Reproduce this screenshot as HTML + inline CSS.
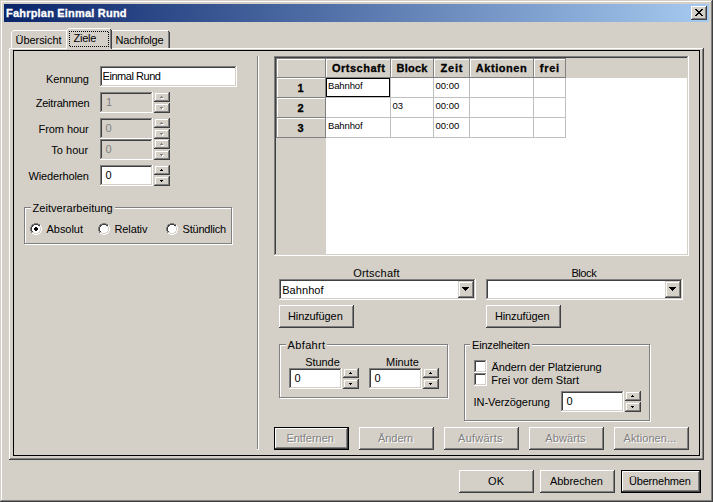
<!DOCTYPE html>
<html><head><meta charset="utf-8"><title>Fahrplan Einmal Rund</title>
<style>
html,body{margin:0;padding:0;}
body{width:713px;height:502px;overflow:hidden;background:#d4d0c8;font-family:"Liberation Sans",sans-serif;font-size:11px;line-height:13px;color:#000;position:relative;}
.a{position:absolute;box-sizing:border-box;white-space:nowrap;}
.t{position:absolute;white-space:nowrap;line-height:13px;height:13px;}
.b{font-weight:bold;-webkit-text-stroke:0.3px;}
.s{font-size:9.5px;}
.dis{color:#808080;text-shadow:1px 1px 0 #fff;}
.gr{color:#808080;}
.win{left:0;top:0;width:713px;height:502px;background:#d4d0c8;box-shadow:inset -1px -1px 0 #404040,inset 1px 1px 0 #d4d0c8,inset -2px -2px 0 #808080,inset 2px 2px 0 #fff;}
.title{left:4px;top:4px;width:705px;height:18px;background:linear-gradient(to right,#0a246a,#a6caf0);}
.btn{background:#d4d0c8;box-shadow:inset -1px -1px 0 #404040,inset 1px 1px 0 #fff,inset -2px -2px 0 #808080,inset 2px 2px 0 #d4d0c8;}
.cbtn{background:#d4d0c8;box-shadow:inset -1px -1px 0 #404040,inset 1px 1px 0 #d4d0c8,inset -2px -2px 0 #808080,inset 2px 2px 0 #fff;}
.dbtn{background:#d4d0c8;box-shadow:inset 0 0 0 1px #000,inset -2px -2px 0 #404040,inset 2px 2px 0 #fff,inset -3px -3px 0 #808080;}
.sunk{background:#fff;box-shadow:inset -1px -1px 0 #fff,inset 1px 1px 0 #808080,inset -2px -2px 0 #d4d0c8,inset 2px 2px 0 #404040;}
.sunk.g{background:#d4d0c8;}
.grp{border:1px solid #808080;box-shadow:1px 1px 0 #fff,inset 1px 1px 0 #fff;}
.leg{background:#d4d0c8;height:4px;}
.sp{width:16px;height:10px;background:#d4d0c8;box-shadow:inset -1px -1px 0 #404040,inset 1px 1px 0 #d4d0c8,inset -2px -2px 0 #808080,inset 2px 2px 0 #fff;}
.sp::before,.sp::after{content:"";position:absolute;background:#000;height:1px;}
.sp.u::before{left:7px;top:4px;width:1px;}
.sp.u::after{left:6px;top:5px;width:3px;}
.sp.d::before{left:6px;top:4px;width:3px;}
.sp.d::after{left:7px;top:5px;width:1px;}
.sp.x::before,.sp.x::after{background:#808080;box-shadow:1px 1px 0 #fff;}
.hd{background:#d4d0c8;border-right:1px solid #808080;border-bottom:1px solid #808080;box-shadow:inset 1px 1px 0 #fff;}
.vl{background:#c0c0c0;width:1px;}
.hl{background:#c0c0c0;height:1px;}
.radio{width:12px;height:12px;border-radius:50%;background:#fff;box-shadow:inset 1px 1px 0 #808080,inset -1px -1px 0 #fff,inset 2px 2px 0 #404040,inset -2px -2px 0 #d4d0c8;}
.w{background:#fff;}.g{background:#808080;}.k{background:#404040;}
.dh{height:1px;background:repeating-linear-gradient(to right,#000 0 1px,transparent 1px 2px);}
.dv{width:1px;background:repeating-linear-gradient(to bottom,#000 0 1px,transparent 1px 2px);}
</style></head><body>
<div class="a win" style="left:0px;top:0px;width:713px;height:502px;"></div>
<div class="a title" style="left:4px;top:4px;width:705px;height:18px;"></div>
<div class="t b" style="left:6.0px;top:7px;letter-spacing:0.20px;color:#fff">Fahrplan Einmal Rund</div>
<div class="a btn" style="left:691px;top:6px;width:16px;height:14px;"><svg width="16" height="14" style="position:absolute;left:0;top:0"><path d="M4 3h2v1h-2zM10 3h2v1h-2zM5 4h2v1h-2zM9 4h2v1h-2zM6 5h4v1h-4zM7 6h2v1h-2zM6 7h4v1h-4zM5 8h2v1h-2zM9 8h2v1h-2zM4 9h2v1h-2zM10 9h2v1h-2z" fill="#000" shape-rendering="crispEdges"/></svg></div>
<div class="a " style="left:9px;top:48px;width:695px;height:412px;box-shadow:inset -1px -1px 0 #404040,inset 1px 1px 0 #fff,inset -2px -2px 0 #808080;"></div>
<div class="a " style="left:13px;top:50px;width:687px;height:406px;border:1px solid #000;"></div>
<div class="a w" style="left:13px;top:30px;width:53px;height:1px;"></div>
<div class="a w" style="left:12px;top:31px;width:1px;height:1px;"></div>
<div class="a w" style="left:11px;top:32px;width:1px;height:16px;"></div>
<div class="t " style="left:15.5px;top:34px;letter-spacing:-0.05px;">Übersicht</div>
<div class="a w" style="left:112px;top:30px;width:56px;height:1px;"></div>
<div class="a k" style="left:168px;top:31px;width:1px;height:1px;"></div>
<div class="a g" style="left:168px;top:32px;width:1px;height:16px;"></div>
<div class="a k" style="left:169px;top:32px;width:1px;height:16px;"></div>
<div class="t " style="left:115.5px;top:34px;letter-spacing:-0.17px;">Nachfolge</div>
<div class="a " style="left:66px;top:28px;width:46px;height:21px;background:#d4d0c8;"></div>
<div class="a w" style="left:68px;top:28px;width:42px;height:1px;"></div>
<div class="a w" style="left:67px;top:29px;width:1px;height:1px;"></div>
<div class="a w" style="left:66px;top:30px;width:1px;height:19px;"></div>
<div class="a k" style="left:110px;top:29px;width:1px;height:1px;"></div>
<div class="a g" style="left:110px;top:30px;width:1px;height:18px;"></div>
<div class="a k" style="left:111px;top:30px;width:1px;height:19px;"></div>
<div class="a dh" style="left:69px;top:31px;width:39px;height:1px;"></div>
<div class="a dh" style="left:70px;top:46px;width:39px;height:1px;"></div>
<div class="a dv" style="left:69px;top:31px;width:1px;height:15px;"></div>
<div class="a dv" style="left:108px;top:32px;width:1px;height:15px;"></div>
<div class="t " style="left:73.5px;top:32px;letter-spacing:-0.25px;">Ziele</div>
<div class="t " style="left:46.1px;top:73px;letter-spacing:-0.21px;">Kennung</div>
<div class="a sunk" style="left:100px;top:66px;width:137px;height:21px;"></div>
<div class="t " style="left:102.5px;top:70px;letter-spacing:-0.45px;">Einmal Rund</div>
<div class="t " style="left:35.7px;top:97px;letter-spacing:-0.20px;">Zeitrahmen</div>
<div class="a sunk g" style="left:100px;top:92px;width:53px;height:21px;"></div>
<div class="t gr" style="left:106.0px;top:96px;letter-spacing:0.00px;">1</div>
<div class="a sp u x" style="left:154px;top:92px;width:16px;height:10px;"></div>
<div class="a sp d x" style="left:154px;top:103px;width:16px;height:10px;"></div>
<div class="t " style="left:38.5px;top:123px;letter-spacing:-0.06px;">From hour</div>
<div class="a sunk g" style="left:100px;top:118px;width:53px;height:21px;"></div>
<div class="t gr" style="left:105.5px;top:122px;letter-spacing:0.00px;">0</div>
<div class="a sp u x" style="left:154px;top:118px;width:16px;height:10px;"></div>
<div class="a sp d x" style="left:154px;top:129px;width:16px;height:10px;"></div>
<div class="t " style="left:51.3px;top:144px;letter-spacing:0.03px;">To hour</div>
<div class="a sunk g" style="left:100px;top:139px;width:53px;height:21px;"></div>
<div class="t gr" style="left:105.5px;top:143px;letter-spacing:0.00px;">0</div>
<div class="a sp u x" style="left:154px;top:139px;width:16px;height:10px;"></div>
<div class="a sp d x" style="left:154px;top:150px;width:16px;height:10px;"></div>
<div class="t " style="left:28.5px;top:170px;letter-spacing:-0.14px;">Wiederholen</div>
<div class="a sunk" style="left:100px;top:165px;width:53px;height:21px;"></div>
<div class="t " style="left:105.5px;top:169px;letter-spacing:0.00px;">0</div>
<div class="a sp u" style="left:154px;top:165px;width:16px;height:10px;"></div>
<div class="a sp d" style="left:154px;top:176px;width:16px;height:10px;"></div>
<div class="a grp" style="left:24px;top:207px;width:208px;height:37px;"></div>
<div class="a " style="left:31px;top:207px;width:84px;height:2px;background:#d4d0c8;"></div>
<div class="t " style="left:32.5px;top:202px;letter-spacing:0.05px;">Zeitverarbeitung</div>
<svg class="a" style="left:30px;top:223px" width="12" height="12" shape-rendering="crispEdges"><path d="M4 0h4v1h-4zM2 1h2v1h-2zM8 1h2v1h-2zM1 2h1v1h-1zM1 3h1v1h-1zM0 4h1v1h-1zM0 5h1v1h-1zM0 6h1v1h-1zM0 7h1v1h-1zM1 8h1v1h-1zM1 9h1v1h-1z" fill="#808080"/><path d="M4 1h4v1h-4zM2 2h2v1h-2zM8 2h2v1h-2zM2 3h1v1h-1zM1 4h1v1h-1zM1 5h1v1h-1zM1 6h1v1h-1zM1 7h1v1h-1zM2 8h1v1h-1z" fill="#404040"/><path d="M4 2h4v1h-4zM10 2h1v1h-1zM3 3h6v1h-6zM10 3h1v1h-1zM2 4h8v1h-8zM11 4h1v1h-1zM2 5h8v1h-8zM11 5h1v1h-1zM2 6h8v1h-8zM11 6h1v1h-1zM2 7h8v1h-8zM11 7h1v1h-1zM3 8h6v1h-6zM10 8h1v1h-1zM4 9h4v1h-4zM10 9h1v1h-1zM2 10h2v1h-2zM8 10h2v1h-2zM4 11h4v1h-4z" fill="#fff"/><path d="M9 3h1v1h-1zM10 4h1v1h-1zM10 5h1v1h-1zM10 6h1v1h-1zM10 7h1v1h-1zM9 8h1v1h-1zM2 9h2v1h-2zM8 9h2v1h-2zM4 10h4v1h-4z" fill="#d4d0c8"/><path d="M5 4h2v1h-2zM4 5h4v1h-4zM4 6h4v1h-4zM5 7h2v1h-2z" fill="#000"/></svg>
<div class="t " style="left:46.5px;top:223px;letter-spacing:-0.03px;">Absolut</div>
<svg class="a" style="left:98px;top:223px" width="12" height="12" shape-rendering="crispEdges"><path d="M4 0h4v1h-4zM2 1h2v1h-2zM8 1h2v1h-2zM1 2h1v1h-1zM1 3h1v1h-1zM0 4h1v1h-1zM0 5h1v1h-1zM0 6h1v1h-1zM0 7h1v1h-1zM1 8h1v1h-1zM1 9h1v1h-1z" fill="#808080"/><path d="M4 1h4v1h-4zM2 2h2v1h-2zM8 2h2v1h-2zM2 3h1v1h-1zM1 4h1v1h-1zM1 5h1v1h-1zM1 6h1v1h-1zM1 7h1v1h-1zM2 8h1v1h-1z" fill="#404040"/><path d="M4 2h4v1h-4zM10 2h1v1h-1zM3 3h6v1h-6zM10 3h1v1h-1zM2 4h8v1h-8zM11 4h1v1h-1zM2 5h8v1h-8zM11 5h1v1h-1zM2 6h8v1h-8zM11 6h1v1h-1zM2 7h8v1h-8zM11 7h1v1h-1zM3 8h6v1h-6zM10 8h1v1h-1zM4 9h4v1h-4zM10 9h1v1h-1zM2 10h2v1h-2zM8 10h2v1h-2zM4 11h4v1h-4z" fill="#fff"/><path d="M9 3h1v1h-1zM10 4h1v1h-1zM10 5h1v1h-1zM10 6h1v1h-1zM10 7h1v1h-1zM9 8h1v1h-1zM2 9h2v1h-2zM8 9h2v1h-2zM4 10h4v1h-4z" fill="#d4d0c8"/></svg>
<div class="t " style="left:114.5px;top:223px;letter-spacing:-0.12px;">Relativ</div>
<svg class="a" style="left:166px;top:223px" width="12" height="12" shape-rendering="crispEdges"><path d="M4 0h4v1h-4zM2 1h2v1h-2zM8 1h2v1h-2zM1 2h1v1h-1zM1 3h1v1h-1zM0 4h1v1h-1zM0 5h1v1h-1zM0 6h1v1h-1zM0 7h1v1h-1zM1 8h1v1h-1zM1 9h1v1h-1z" fill="#808080"/><path d="M4 1h4v1h-4zM2 2h2v1h-2zM8 2h2v1h-2zM2 3h1v1h-1zM1 4h1v1h-1zM1 5h1v1h-1zM1 6h1v1h-1zM1 7h1v1h-1zM2 8h1v1h-1z" fill="#404040"/><path d="M4 2h4v1h-4zM10 2h1v1h-1zM3 3h6v1h-6zM10 3h1v1h-1zM2 4h8v1h-8zM11 4h1v1h-1zM2 5h8v1h-8zM11 5h1v1h-1zM2 6h8v1h-8zM11 6h1v1h-1zM2 7h8v1h-8zM11 7h1v1h-1zM3 8h6v1h-6zM10 8h1v1h-1zM4 9h4v1h-4zM10 9h1v1h-1zM2 10h2v1h-2zM8 10h2v1h-2zM4 11h4v1h-4z" fill="#fff"/><path d="M9 3h1v1h-1zM10 4h1v1h-1zM10 5h1v1h-1zM10 6h1v1h-1zM10 7h1v1h-1zM9 8h1v1h-1zM2 9h2v1h-2zM8 9h2v1h-2zM4 10h4v1h-4z" fill="#d4d0c8"/></svg>
<div class="t " style="left:182.5px;top:223px;letter-spacing:-0.21px;">Stündlich</div>
<div class="a g" style="left:257px;top:56px;width:1px;height:393px;"></div>
<div class="a w" style="left:258px;top:56px;width:1px;height:394px;"></div>
<div class="a w" style="left:257px;top:449px;width:2px;height:1px;"></div>
<div class="a sunk" style="left:274px;top:56px;width:415px;height:200px;"></div>
<div class="a " style="left:276px;top:58px;width:411px;height:20px;background:#d4d0c8;"></div>
<div class="a " style="left:276px;top:78px;width:50px;height:176px;background:#d4d0c8;"></div>
<div class="a g" style="left:276px;top:58px;width:50px;height:1px;"></div>
<div class="a g" style="left:325px;top:58px;width:1px;height:20px;"></div>
<div class="a g" style="left:276px;top:77px;width:50px;height:1px;"></div>
<div class="a g" style="left:276px;top:58px;width:1px;height:20px;"></div>
<div class="a w" style="left:277px;top:59px;width:1px;height:18px;"></div>
<div class="a w" style="left:277px;top:59px;width:48px;height:1px;"></div>
<div class="a g" style="left:326px;top:58px;width:65px;height:1px;"></div>
<div class="a g" style="left:390px;top:58px;width:1px;height:20px;"></div>
<div class="a g" style="left:326px;top:77px;width:65px;height:1px;"></div>
<div class="a w" style="left:326px;top:59px;width:1px;height:18px;"></div>
<div class="a w" style="left:326px;top:59px;width:64px;height:1px;"></div>
<div class="a g" style="left:391px;top:58px;width:43px;height:1px;"></div>
<div class="a g" style="left:433px;top:58px;width:1px;height:20px;"></div>
<div class="a g" style="left:391px;top:77px;width:43px;height:1px;"></div>
<div class="a w" style="left:391px;top:59px;width:1px;height:18px;"></div>
<div class="a w" style="left:391px;top:59px;width:42px;height:1px;"></div>
<div class="a g" style="left:434px;top:58px;width:36px;height:1px;"></div>
<div class="a g" style="left:469px;top:58px;width:1px;height:20px;"></div>
<div class="a g" style="left:434px;top:77px;width:36px;height:1px;"></div>
<div class="a w" style="left:434px;top:59px;width:1px;height:18px;"></div>
<div class="a w" style="left:434px;top:59px;width:35px;height:1px;"></div>
<div class="a g" style="left:470px;top:58px;width:64px;height:1px;"></div>
<div class="a g" style="left:533px;top:58px;width:1px;height:20px;"></div>
<div class="a g" style="left:470px;top:77px;width:64px;height:1px;"></div>
<div class="a w" style="left:470px;top:59px;width:1px;height:18px;"></div>
<div class="a w" style="left:470px;top:59px;width:63px;height:1px;"></div>
<div class="a g" style="left:534px;top:58px;width:32px;height:1px;"></div>
<div class="a g" style="left:565px;top:58px;width:1px;height:20px;"></div>
<div class="a g" style="left:534px;top:77px;width:32px;height:1px;"></div>
<div class="a w" style="left:534px;top:59px;width:1px;height:18px;"></div>
<div class="a w" style="left:534px;top:59px;width:31px;height:1px;"></div>
<div class="a g" style="left:276px;top:78px;width:1px;height:20px;"></div>
<div class="a w" style="left:277px;top:78px;width:1px;height:19px;"></div>
<div class="a w" style="left:277px;top:78px;width:48px;height:1px;"></div>
<div class="a g" style="left:325px;top:78px;width:1px;height:20px;"></div>
<div class="a g" style="left:276px;top:97px;width:50px;height:1px;"></div>
<div class="a g" style="left:276px;top:98px;width:1px;height:20px;"></div>
<div class="a w" style="left:277px;top:98px;width:1px;height:19px;"></div>
<div class="a w" style="left:277px;top:98px;width:48px;height:1px;"></div>
<div class="a g" style="left:325px;top:98px;width:1px;height:20px;"></div>
<div class="a g" style="left:276px;top:117px;width:50px;height:1px;"></div>
<div class="a g" style="left:276px;top:118px;width:1px;height:20px;"></div>
<div class="a w" style="left:277px;top:118px;width:1px;height:19px;"></div>
<div class="a w" style="left:277px;top:118px;width:48px;height:1px;"></div>
<div class="a g" style="left:325px;top:118px;width:1px;height:20px;"></div>
<div class="a g" style="left:276px;top:137px;width:50px;height:1px;"></div>
<div class="a vl" style="left:390px;top:78px;width:1px;height:60px;"></div>
<div class="a vl" style="left:433px;top:78px;width:1px;height:60px;"></div>
<div class="a vl" style="left:469px;top:78px;width:1px;height:60px;"></div>
<div class="a vl" style="left:533px;top:78px;width:1px;height:60px;"></div>
<div class="a vl" style="left:565px;top:78px;width:1px;height:60px;"></div>
<div class="a hl" style="left:326px;top:97px;width:240px;height:1px;"></div>
<div class="a hl" style="left:326px;top:117px;width:240px;height:1px;"></div>
<div class="a hl" style="left:326px;top:137px;width:240px;height:1px;"></div>
<div class="a " style="left:326px;top:78px;width:64px;height:19px;border:1px solid #000;"></div>
<div class="t b" style="left:331.9px;top:62px;letter-spacing:0.51px;">Ortschaft</div>
<div class="t b" style="left:396.6px;top:62px;letter-spacing:0.19px;">Block</div>
<div class="t b" style="left:440.5px;top:62px;letter-spacing:0.80px;">Zeit</div>
<div class="t b" style="left:475.8px;top:62px;letter-spacing:0.55px;">Aktionen</div>
<div class="t b" style="left:539.8px;top:62px;letter-spacing:0.72px;">frei</div>
<div class="t b" style="left:297.5px;top:82px;letter-spacing:0.00px;">1</div>
<div class="t b" style="left:297.5px;top:102px;letter-spacing:0.00px;">2</div>
<div class="t b" style="left:297.5px;top:122px;letter-spacing:0.00px;">3</div>
<div class="t s" style="left:328.0px;top:79px;letter-spacing:-0.13px;">Bahnhof</div>
<div class="t s" style="left:435.6px;top:79px;letter-spacing:-0.02px;">00:00</div>
<div class="t s" style="left:392.5px;top:99px;letter-spacing:0.00px;">03</div>
<div class="t s" style="left:435.6px;top:99px;letter-spacing:-0.02px;">00:00</div>
<div class="t s" style="left:328.0px;top:119px;letter-spacing:-0.13px;">Bahnhof</div>
<div class="t s" style="left:435.6px;top:119px;letter-spacing:-0.02px;">00:00</div>
<div class="t " style="left:353.2px;top:267px;letter-spacing:0.22px;">Ortschaft</div>
<div class="a sunk" style="left:279px;top:279px;width:197px;height:21px;"></div>
<div class="a cbtn" style="left:458px;top:281px;width:16px;height:17px;"><svg width="7" height="4" style="position:absolute;left:4px;top:6px"><path d="M0 0h7v1h-7zM1 1h5v1h-5zM2 2h3v1h-3zM3 3h1v1h-1z" fill="#000" shape-rendering="crispEdges"/></svg></div>
<div class="t " style="left:282.2px;top:284px;letter-spacing:0.07px;">Bahnhof</div>
<div class="t " style="left:571.4px;top:267px;letter-spacing:-0.40px;">Block</div>
<div class="a sunk" style="left:486px;top:279px;width:197px;height:21px;"></div>
<div class="a cbtn" style="left:665px;top:281px;width:16px;height:17px;"><svg width="7" height="4" style="position:absolute;left:4px;top:6px"><path d="M0 0h7v1h-7zM1 1h5v1h-5zM2 2h3v1h-3zM3 3h1v1h-1z" fill="#000" shape-rendering="crispEdges"/></svg></div>
<div class="a btn" style="left:279px;top:305px;width:75px;height:23px;"></div>
<div class="t " style="left:288.0px;top:310px;letter-spacing:-0.10px;">Hinzufügen</div>
<div class="a btn" style="left:486px;top:305px;width:75px;height:23px;"></div>
<div class="t " style="left:494.9px;top:310px;letter-spacing:-0.10px;">Hinzufügen</div>
<div class="a grp" style="left:279px;top:344px;width:169px;height:54px;"></div>
<div class="a " style="left:286px;top:344px;width:41px;height:2px;background:#d4d0c8;"></div>
<div class="t " style="left:287.6px;top:339px;letter-spacing:0.35px;">Abfahrt</div>
<div class="t " style="left:305.2px;top:356px;letter-spacing:-0.05px;">Stunde</div>
<div class="a sunk" style="left:289px;top:368px;width:53px;height:21px;"></div>
<div class="t " style="left:294.5px;top:372px;letter-spacing:0.00px;">0</div>
<div class="a sp u" style="left:343px;top:368px;width:16px;height:10px;"></div>
<div class="a sp d" style="left:343px;top:379px;width:16px;height:10px;"></div>
<div class="t " style="left:386.1px;top:356px;letter-spacing:-0.07px;">Minute</div>
<div class="a sunk" style="left:369px;top:368px;width:53px;height:21px;"></div>
<div class="t " style="left:374.5px;top:372px;letter-spacing:0.00px;">0</div>
<div class="a sp u" style="left:423px;top:368px;width:16px;height:10px;"></div>
<div class="a sp d" style="left:423px;top:379px;width:16px;height:10px;"></div>
<div class="a grp" style="left:464px;top:344px;width:186px;height:77px;"></div>
<div class="a " style="left:470px;top:344px;width:62px;height:2px;background:#d4d0c8;"></div>
<div class="t " style="left:472.0px;top:339px;letter-spacing:-0.19px;">Einzelheiten</div>
<div class="a sunk" style="left:474px;top:360px;width:13px;height:13px;"></div>
<div class="t " style="left:491.5px;top:361px;letter-spacing:-0.11px;">Ändern der Platzierung</div>
<div class="a sunk" style="left:474px;top:373px;width:13px;height:13px;"></div>
<div class="t " style="left:491.2px;top:374px;letter-spacing:-0.01px;">Frei vor dem Start</div>
<div class="t " style="left:473.5px;top:396px;letter-spacing:-0.06px;">IN-Verzögerung</div>
<div class="a sunk" style="left:561px;top:391px;width:63px;height:21px;"></div>
<div class="t " style="left:566.5px;top:395px;letter-spacing:0.00px;">0</div>
<div class="a sp u" style="left:625px;top:391px;width:16px;height:10px;"></div>
<div class="a sp d" style="left:625px;top:402px;width:16px;height:10px;"></div>
<div class="a dbtn" style="left:274px;top:427px;width:75px;height:23px;"></div>
<div class="t dis" style="left:286.4px;top:432px;letter-spacing:-0.03px;">Entfernen</div>
<div class="a btn" style="left:359px;top:427px;width:75px;height:23px;"></div>
<div class="t dis" style="left:378.0px;top:432px;letter-spacing:-0.06px;">Ändern</div>
<div class="a btn" style="left:444px;top:427px;width:75px;height:23px;"></div>
<div class="t dis" style="left:458.1px;top:432px;letter-spacing:0.24px;">Aufwärts</div>
<div class="a btn" style="left:529px;top:427px;width:75px;height:23px;"></div>
<div class="t dis" style="left:545.3px;top:432px;letter-spacing:0.09px;">Abwärts</div>
<div class="a btn" style="left:614px;top:427px;width:75px;height:23px;"></div>
<div class="t dis" style="left:623.5px;top:432px;letter-spacing:0.09px;">Aktionen...</div>
<div class="a btn" style="left:459px;top:470px;width:75px;height:23px;"></div>
<div class="t " style="left:488.1px;top:475px;letter-spacing:0.00px;">OK</div>
<div class="a btn" style="left:540px;top:470px;width:75px;height:23px;"></div>
<div class="t " style="left:549.9px;top:475px;letter-spacing:-0.02px;">Abbrechen</div>
<div class="a dbtn" style="left:621px;top:470px;width:80px;height:23px;"></div>
<div class="t " style="left:629.0px;top:475px;letter-spacing:-0.19px;">Übernehmen</div>
</body></html>
